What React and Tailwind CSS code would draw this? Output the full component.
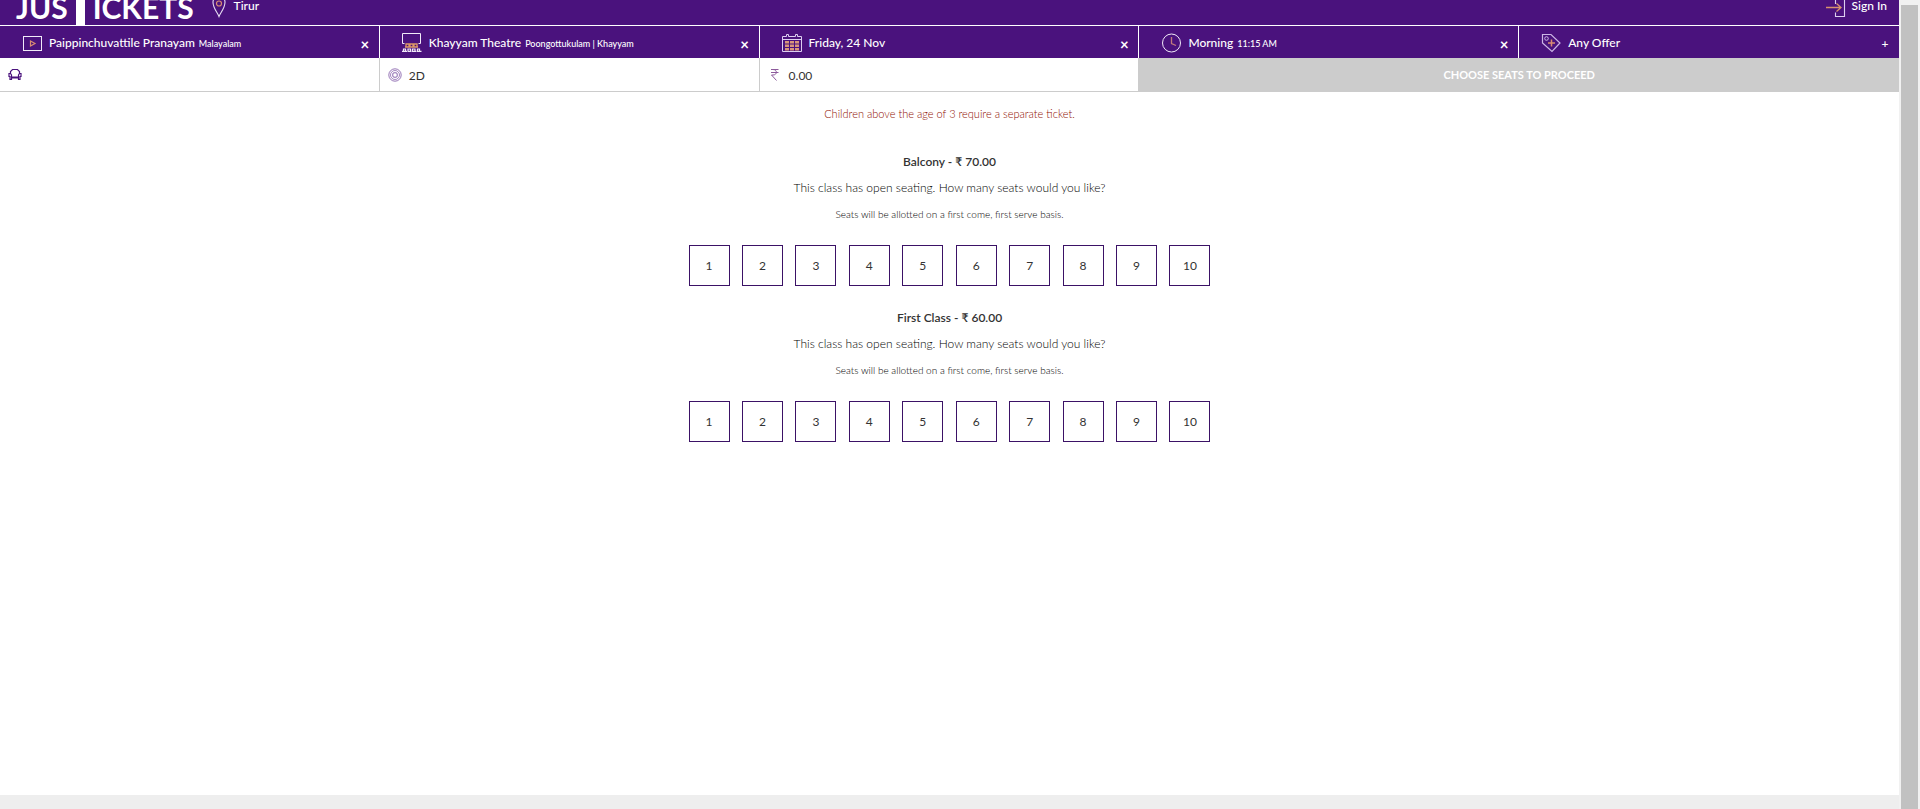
const SEAT_COUNTS = [1, 2, 3, 4, 5, 6, 7, 8, 9, 10];

function PinIcon() {
  return (
    <svg width="14" height="24" viewBox="0 0 14 24" fill="none" aria-hidden="true">
      <path d="M7 22.500C5.500 18.500 1 14 1 8.200a6 6 0 0 1 12 0C13 14 8.500 18.500 7 22.500z" stroke="#e6dcf2" strokeWidth="1.100" />
      <circle cx="7" cy="9.500" r="2.500" stroke="#d98c73" strokeWidth="1.200" />
    </svg>
  );
}

function SignInIcon() {
  return (
    <svg width="20" height="24" viewBox="0 0 20 24" fill="none" aria-hidden="true">
      <path d="M9.500 10V1.500h9v21h-9v-4" stroke="#ddcff0" strokeWidth="1.100" />
      <path d="M0 13.500h14.500M10.500 9.500l4.500 4-4.500 4" stroke="#d9926e" strokeWidth="1.300" />
    </svg>
  );
}

function PlayIcon() {
  return (
    <svg width="20" height="20" viewBox="0 0 20 20" fill="none" aria-hidden="true">
      <rect x="1.500" y="3.500" width="18" height="14" stroke="#f1eaf8" />
      <path d="M8.500 8v5l4.500-2.500z" stroke="#d98c73" strokeWidth="1.200" />
    </svg>
  );
}

function TheatreIcon() {
  return (
    <svg width="20" height="20" viewBox="0 0 20 20" fill="none" aria-hidden="true">
      <path d="M2.500 10.500h-2V.500h18v10h-2" stroke="#f1eaf8" />
      <path d="M4 13.500V11h3v2.500M8 13.500V11h3v2.500M12 13.500V11h3v2.500M3 14h13" stroke="#dd9968" strokeWidth="1.300" />
      <path d="M1.500 18v-2h2V18M6 18v-2h2.500V18M10.500 18v-2H13V18M15.500 18v-2h2V18M0 18.300h5M5.500 18.300h4M10 18.300h4M14.500 18.300h5" stroke="#f1eaf8" strokeWidth="1.200" />
    </svg>
  );
}

function CalendarIcon() {
  return (
    <svg width="20" height="20" viewBox="0 0 20 20" fill="none" aria-hidden="true">
      <path d="M.500 18.500V3.500h4v-2h2v2h7v-2h2v2h4v15zM.500 6.500h19" stroke="#ddcff0" />
      <path d="M3 8h4v2.500H3zM8 8h4v2.500H8zM13 8h4v2.500h-4zM3 11.500h4V14H3zM8 11.500h4V14H8zM13 11.500h4V14h-4zM3 15h4v2.500H3zM8 15h4v2.500H8zM13 15h4v2.500h-4z" fill="#d9957b" />
    </svg>
  );
}

function ClockIcon() {
  return (
    <svg width="20" height="20" viewBox="0 0 20 20" fill="none" aria-hidden="true">
      <circle cx="10.500" cy="10" r="9" stroke="#f1eaf8" />
      <path d="M10.500 4v6.500l4.500 2" stroke="#c07a7c" strokeWidth="1.300" />
    </svg>
  );
}

function TagIcon() {
  return (
    <svg width="20" height="20" viewBox="0 0 20 20" fill="none" aria-hidden="true">
      <path d="M1.500 1.500h8.500l9 8.500-8 8.500L1.500 10z" stroke="#cdb6e6" strokeWidth="1.200" />
      <circle cx="5.500" cy="5.500" r="1.800" stroke="#cdb6e6" />
      <path d="M10.500 6.500v7M7 10h7" stroke="#d98c73" strokeWidth="1.500" />
    </svg>
  );
}

function SofaIcon() {
  return (
    <svg width="14" height="14" viewBox="0 0 14 14" fill="none" stroke="#4a127d" aria-hidden="true">
      <path d="M2.500 5.500V3.500L4.500 1.500h5l2 2v2" strokeWidth="1.200" />
      <path d="M1 5.500h1.500l1 1.500v2h7V7l1-1.500H13v3h-1v3h-1.500V10h-7v1.500H2v-3H1z" strokeWidth="1.200" />
    </svg>
  );
}

function ReelIcon() {
  return (
    <svg width="14" height="14" viewBox="0 0 14 14" fill="none" stroke="#7c53a5" aria-hidden="true">
      <circle cx="7" cy="7" r="6.200" strokeWidth=".800" />
      <circle cx="7" cy="7" r="4.500" strokeWidth=".700" />
      <rect x="4.800" y="4.800" width="4.400" height="4.400" rx="1.200" strokeWidth=".900" />
    </svg>
  );
}

function RupeeIcon() {
  return (
    <svg width="14" height="14" viewBox="0 0 14 14" fill="none" stroke="#8d5a9c" aria-hidden="true">
      <path d="M3 1.500h7.500M3 4.500h7.500M5 1.500c4.500 0 4.500 5.500 0 5.500H3.500l5 5.500" />
    </svg>
  );
}

const FILTERS = [
  { icon: PlayIcon, title: "Paippinchuvattile Pranayam", detail: "Malayalam", selected: true },
  { icon: TheatreIcon, title: "Khayyam Theatre", detail: "Poongottukulam | Khayyam", selected: true },
  { icon: CalendarIcon, title: "Friday, 24 Nov", selected: true },
  { icon: ClockIcon, title: "Morning", detail: "11:15 AM", selected: true },
  { icon: TagIcon, title: "Any Offer", selected: false },
];

const CLASSES = [
  { name: "Balcony", price: "70.00" },
  { name: "First Class", price: "60.00" },
];

function Header() {
  return (
    <header className="flex h-[25px] items-end justify-between overflow-hidden bg-[#4a127d] text-white">
      <div className="flex items-end">
        <a href="#home" aria-label="Justickets" className="flex items-end pl-4 text-[30px] leading-9 font-bold">
          <span>JUS</span>
          <svg width="9" height="25" viewBox="0 0 9 25" className="mx-2" aria-hidden="true">
            <rect width="9" height="25" fill="#fff" />
          </svg>
          <span>ICKETS</span>
        </a>
        <a href="#city" className="flex items-center gap-2 pb-[7px] pl-[18px] leading-3 font-medium">
          <PinIcon />
          Tirur
        </a>
      </div>
      <a href="#sign-in" className="flex items-center gap-[6px] pr-3 pb-[7px] leading-3 font-medium">
        <SignInIcon />
        Sign In
      </a>
    </header>
  );
}

function Filter({ icon: Icon, title, detail, selected }) {
  return (
    <div className="flex items-center justify-between border-r border-white pr-2 pl-[22px] last:border-r-0">
      <button type="button" className="flex items-center gap-[7px] pt-px">
        <Icon />
        <span className="flex items-baseline gap-1 font-medium whitespace-nowrap">
          {title}
          {detail && <span className="text-[9px]">{detail}</span>}
        </span>
      </button>
      {selected ? (
        <button type="button" aria-label={`Clear ${title}`} className="w-3 pt-1 text-center text-[15px] leading-4 font-bold">
          ×
        </button>
      ) : (
        <button type="button" aria-label={`Choose ${title}`} className="w-3 pt-1 text-center leading-4 font-medium">
          +
        </button>
      )}
    </div>
  );
}

function Summary({ icon: Icon, children }) {
  return (
    <div className="flex items-center gap-[7px] border-r border-b border-[#ccc] pl-2">
      <Icon />
      <span className="pt-[2px]">{children}</span>
    </div>
  );
}

function SeatClass({ name, price }) {
  return (
    <section className="flex flex-col items-center">
      <h2 className="leading-[26px] font-semibold">
        {name} - ₹ {price}
      </h2>
      <p className="leading-[26px] font-light text-black">This class has open seating. How many seats would you like?</p>
      <p className="text-[10px] leading-[27px] font-light text-black">Seats will be allotted on a first come, first serve basis.</p>
      <div className="mt-[17px] flex w-full max-w-[522px] justify-between">
        {SEAT_COUNTS.map((count) => (
          <button key={count} type="button" className="h-[41px] w-[41px] border border-[#3b1266]">
            {count}
          </button>
        ))}
      </div>
    </section>
  );
}

export default function App() {
  return (
    <div className="flex min-h-screen bg-white font-['Lato',sans-serif] text-[12px] text-[#333]">
      <div className="flex min-w-0 flex-1 flex-col">
        <Header />
        <nav className="grid h-[33px] grid-cols-5 border-t border-white bg-[#4a127d] text-white">
          {FILTERS.map((filter) => (
            <Filter key={filter.title} {...filter} />
          ))}
        </nav>
        <div className="grid h-[34px] grid-cols-5">
          <Summary icon={SofaIcon} />
          <Summary icon={ReelIcon}>2D</Summary>
          <Summary icon={RupeeIcon}>0.00</Summary>
          <button type="button" disabled className="col-span-2 bg-[#ccc] pt-px text-[11px] font-bold text-white">
            CHOOSE SEATS TO PROCEED
          </button>
        </div>
        <main className="flex flex-1 flex-col gap-[19px] pt-[11px]">
          <p className="mb-[5px] text-center text-[11px] leading-[22px] font-light text-[#8f0d00]">
            Children above the age of 3 require a separate ticket.
          </p>
          {CLASSES.map((seatClass) => (
            <SeatClass key={seatClass.name} {...seatClass} />
          ))}
        </main>
        <footer className="h-[14px] bg-[#eee]" />
      </div>
      <div className="flex w-[21px] bg-[#f1f1f1] pt-[5px] pr-[2px] pl-[2px]" aria-hidden="true">
        <div className="flex-1 bg-[#c1c1c1]" />
      </div>
    </div>
  );
}
